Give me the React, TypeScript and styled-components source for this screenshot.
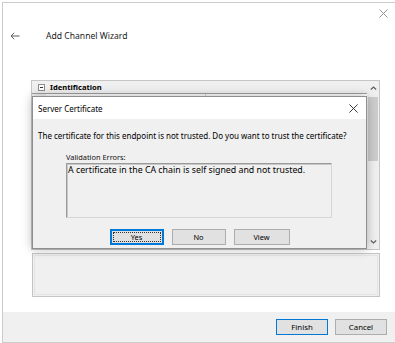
import styled, { createGlobalStyle } from "styled-components"

const GlobalStyle = createGlobalStyle`
  html, body {
    margin: 0;
    padding: 0;
    background: #ffffff;
  }
  body {
    font-family: "Noto Sans", "Open Sans", sans-serif;
    color: #000;
  }
`

interface GridRow {
  name: string,
  value: string
}

// rows behind the dialog stay empty, only the first and last peek out
const rows: GridRow[] = [
  { name: 'Name', value: 'New Channel' },
  { name: '', value: '' },
  { name: '', value: '' },
  { name: '', value: '' },
  { name: '', value: '' },
  { name: '', value: '' },
  { name: '', value: '' },
  { name: '', value: '' },
  { name: '', value: '' },
  { name: '', value: '' },
  { name: '', value: '' },
  { name: 'Session Id', value: '0000-000' },
]

export default function App() {
  return (
    <>
      <GlobalStyle />
      <Window>
        <CloseRow>
          <CloseIcon size={9} color="#8a8a8a" />
        </CloseRow>
        <TitleRow>
          <BackArrow viewBox="0 0 10 8" width={10} height={8}>
            <path d="M9.5 4H1M4.2 0.8L1 4l3.2 3.2" stroke="#5a5a5a" strokeWidth="1" fill="none" />
          </BackArrow>
          <WizardTitle>Add Channel Wizard</WizardTitle>
        </TitleRow>

        <Main>
          <PropertyGrid>
            <GridBody>
              <CategoryRow>
                <Expander>
                  <svg viewBox="0 0 7 7" width={7} height={7}>
                    <rect x="0.5" y="0.5" width="6" height="6" fill="#fff" stroke="#8c8c8c" />
                    <path d="M2 3.5h3" stroke="#333" strokeWidth="1" />
                  </svg>
                </Expander>
                <CategoryName>Identification</CategoryName>
              </CategoryRow>
              {rows.map((row, i) => (
                <PropRow key={i}>
                  <Margin />
                  <PropName>{row.name}</PropName>
                  <PropValue>{row.value}</PropValue>
                </PropRow>
              ))}
            </GridBody>
            <ScrollBar>
              <ScrollArrow>
                <svg viewBox="0 0 7 4" width={7} height={4}>
                  <path d="M0.8 3.5L3.5 1 6.2 3.5" stroke="#606060" strokeWidth="1.2" fill="none" />
                </svg>
              </ScrollArrow>
              <ScrollTrack>
                <Thumb />
              </ScrollTrack>
              <ScrollArrow>
                <svg viewBox="0 0 7 4" width={7} height={4}>
                  <path d="M0.8 0.5L3.5 3 6.2 0.5" stroke="#606060" strokeWidth="1.2" fill="none" />
                </svg>
              </ScrollArrow>
            </ScrollBar>
          </PropertyGrid>
          <DescPanel />
        </Main>

        <Footer>
          <FooterButton $default>Finish</FooterButton>
          <FooterButton>Cancel</FooterButton>
        </Footer>

        <Dialog>
          <DialogTitleBar>
            <DialogTitle>Server Certificate</DialogTitle>
            <CloseIcon size={9} color="#222" />
          </DialogTitleBar>
          <DialogBody>
            <Message>The certificate for this endpoint is not trusted. Do you want to trust the certificate?</Message>
            <ErrorsLabel>Validation Errors:</ErrorsLabel>
            <ErrorsBox>A certificate in the CA chain is self signed and not trusted.</ErrorsBox>
            <DialogButtons>
              <DialogButton $default>
                <FocusRect>Yes</FocusRect>
              </DialogButton>
              <DialogButton>No</DialogButton>
              <DialogButton $wide>View</DialogButton>
            </DialogButtons>
          </DialogBody>
        </Dialog>
      </Window>
    </>
  )
}

function CloseIcon({ size, color }: { size: number, color: string }) {
  return (
    <svg viewBox="0 0 10 10" width={size} height={size}>
      <path d="M0.5 0.5l9 9M9.5 0.5l-9 9" stroke={color} strokeWidth="1" fill="none" />
    </svg>
  )
}


const Window = styled.div`
  position: relative;
  box-sizing: border-box;
  margin: 2px 0 0 2px;
  width: 393px;
  height: 341px;
  border: 1px solid #cccccc;
  border-right: none;
  background: #ffffff;
  display: flex;
  flex-direction: column;
  overflow: hidden;
`
const CloseRow = styled.div`
  display: flex;
  justify-content: flex-end;
  padding: 6px 7px 0 0;
  height: 14px;
  svg {
    display: block;
  }
`
const TitleRow = styled.div`
  display: flex;
  align-items: center;
  height: 16px;
  margin-top: 5px;
  padding-left: 7px;
`
const BackArrow = styled.svg`
  display: block;
`
const WizardTitle = styled.span`
  margin-left: 26px;
  font-size: 8.6px;
  color: #1a1a1a;
`
const Main = styled.div`
  display: flex;
  flex-direction: column;
  gap: 3px;
  margin-top: 36px;
  padding-left: 28px;
  width: 349px;
`
const PropertyGrid = styled.div`
  box-sizing: border-box;
  height: 170px;
  border: 1px solid #c6c6c6;
  display: flex;
  background: #ffffff;
  overflow: hidden;
`
const GridBody = styled.div`
  flex: 1;
  display: flex;
  flex-direction: column;
  overflow: hidden;
`
const CategoryRow = styled.div`
  display: flex;
  align-items: center;
  flex: 0 0 12px;
  background: #f0f0f0;
  border-bottom: 1px solid #a0a0a0;
`
const Expander = styled.div`
  width: 17px;
  display: flex;
  justify-content: center;
  padding-left: 1px;
  svg {
    display: block;
  }
`
const CategoryName = styled.span`
  font-size: 7.6px;
  font-weight: 700;
  color: #000;
`
const PropRow = styled.div`
  display: flex;
  flex: 0 0 13px;
  font-size: 7.4px;
  color: #111;
`
const Margin = styled.div`
  width: 14px;
  background: #f0f0f0;
`
const PropName = styled.div`
  box-sizing: border-box;
  width: 160px;
  padding-left: 4px;
  line-height: 12px;
  border-bottom: 1px solid #f0f0f0;
  border-right: 1px solid #d8d8d8;
`
const PropValue = styled.div`
  flex: 1;
  padding-left: 3px;
  line-height: 12px;
  border-bottom: 1px solid #f0f0f0;
`
const ScrollBar = styled.div`
  width: 12px;
  background: #f0f0f0;
  display: flex;
  flex-direction: column;
`
const ScrollArrow = styled.div`
  height: 14px;
  display: flex;
  align-items: center;
  justify-content: center;
  svg {
    display: block;
  }
`
const ScrollTrack = styled.div`
  flex: 1;
  padding: 2px 1px 0;
`
const Thumb = styled.div`
  height: 64px;
  background: #cdcdcd;
`
const DescPanel = styled.div`
  box-sizing: border-box;
  margin-left: 1px;
  height: 44px;
  border: 1px solid #c4c4c4;
  outline: 1px solid #e4e4e4;
  outline-offset: -3px;
  background: #f0f0f0;
`
const Footer = styled.div`
  margin-top: auto;
  height: 30px;
  background: #f0f0f0;
  display: flex;
  justify-content: flex-end;
  align-items: flex-start;
  gap: 7px;
  padding: 7px 8px 0 0;
  box-sizing: border-box;
`
const FooterButton = styled.button<{ $default?: boolean }>`
  box-sizing: border-box;
  width: 52px;
  height: 16px;
  padding: 0;
  margin: 0;
  font-family: inherit;
  font-size: 7.8px;
  color: #000;
  background: #e1e1e1;
  border: 1px solid ${props => props.$default ? '#0078d7' : '#adadad'};
`
const Dialog = styled.div`
  position: absolute;
  left: 29px;
  top: 93px;
  box-sizing: border-box;
  width: 335px;
  height: 153px;
  border: 1px solid #8e8e8e;
  background: #f0f0f0;
  box-shadow: 0 0 10px rgba(0, 0, 0, 0.28);
  display: flex;
  flex-direction: column;
`
const DialogTitleBar = styled.div`
  height: 22px;
  background: #ffffff;
  display: flex;
  align-items: center;
  justify-content: space-between;
  padding: 0 8px 0 5px;
  svg {
    display: block;
  }
`
const DialogTitle = styled.span`
  font-size: 8px;
  color: #000;
`
const DialogBody = styled.div`
  flex: 1;
  display: flex;
  flex-direction: column;
  padding: 0 0 0 5px;
  font-size: 7.4px;
  color: #000;
`
const Message = styled.div`
  margin-top: 12px;
  font-size: 8px;
  line-height: 10px;
  white-space: nowrap;
`
const ErrorsLabel = styled.div`
  margin: 11px 0 0 28px;
  line-height: 10px;
  color: #111;
`
const ErrorsBox = styled.div`
  box-sizing: border-box;
  margin: 1px 0 0 28px;
  width: 266px;
  height: 55px;
  padding: 1px 1px;
  font-size: 8.8px;
  line-height: 11px;
  background: #f0f0f0;
  border: 1px solid #d6d6d6;
  border-top-color: #9a9a9a;
  border-left-color: #9a9a9a;
  box-shadow: inset 1px 1px 0 #c8c8c8;
`
const DialogButtons = styled.div`
  display: flex;
  justify-content: center;
  gap: 8px;
  margin-top: 11px;
  padding-right: 5px;
`
const DialogButton = styled.button<{ $default?: boolean, $wide?: boolean }>`
  box-sizing: border-box;
  width: ${props => props.$wide ? '56px' : '54px'};
  height: 16px;
  padding: ${props => props.$default ? '1px' : '0'};
  margin: 0;
  font-family: inherit;
  font-size: 7.4px;
  line-height: 10px;
  color: #000;
  background: #e1e1e1;
  border: ${props => props.$default ? '2px solid #0078d7' : '1px solid #adadad'};
`
const FocusRect = styled.span`
  display: block;
  box-sizing: border-box;
  height: 10px;
  width: 100%;
  line-height: 8px;
  text-align: center;
  border: 1px dotted #333;
`
